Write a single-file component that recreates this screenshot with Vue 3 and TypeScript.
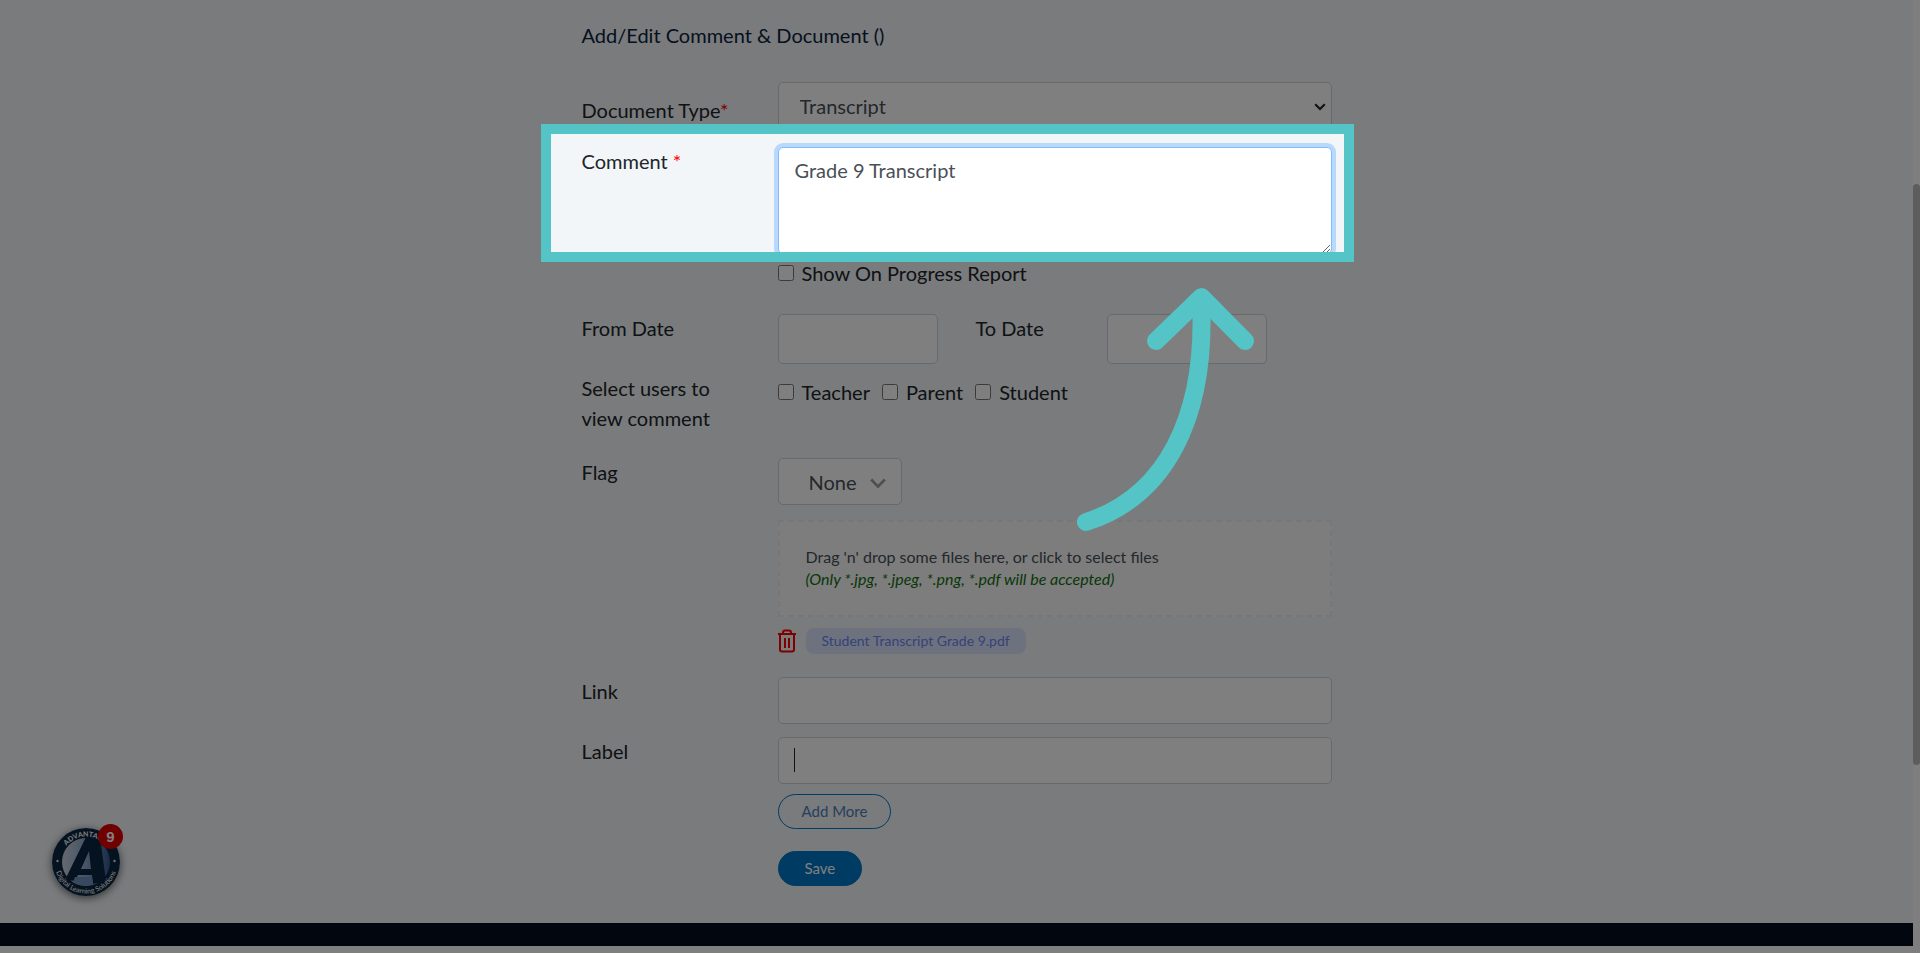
<script setup lang="ts">
import { ref } from 'vue'

interface Viewer {
  id: string
  name: string
  checked: boolean
}

const documentType = ref('Transcript')
const comment = ref('Grade 9 Transcript')
const showOnReport = ref(false)
const fromDate = ref('')
const toDate = ref('')
const flag = ref('None')
const link = ref('')
const linkLabel = ref('')
const files = ref<string[]>(['Student Transcript Grade 9.pdf'])
const viewers = ref<Viewer[]>([
  { id: 'teacher', name: 'Teacher', checked: false },
  { id: 'parent', name: 'Parent', checked: false },
  { id: 'student', name: 'Student', checked: false },
])

function removeFile(index: number) {
  files.value.splice(index, 1)
}
</script>

<template>
  <div class="page">
    <main class="content">
      <form class="form" @submit.prevent>
        <h1 class="title">Add/Edit Comment &amp; Document ()</h1>

        <div class="row type-row">
          <label class="label" for="doc-type">Document Type<span class="required">*</span></label>
          <div class="select-wrap">
            <select id="doc-type" v-model="documentType" class="control">
              <option>Transcript</option>
            </select>
            <svg class="select-arrow" viewBox="0 0 12 8" aria-hidden="true">
              <path d="M1.2 1.2 6 6l4.8-4.8" fill="none" stroke="currentColor" stroke-width="2.2" />
            </svg>
          </div>
        </div>

        <div class="row comment-row">
          <label class="label" for="comment">Comment <span class="required">*</span></label>
          <textarea id="comment" v-model="comment" class="control comment"></textarea>
          <div class="spotlight"></div>
          <svg class="arrow" viewBox="0 0 180 250" aria-hidden="true">
            <path d="M129 20C135 138 93 217 14 242" />
            <path d="M84 61 129.500 17 173 61" />
          </svg>
        </div>

        <div class="row report-row">
          <label class="check field"><input v-model="showOnReport" type="checkbox" />Show On Progress Report</label>
        </div>

        <div class="row date-row">
          <label class="label" for="from-date">From Date</label>
          <div class="dates">
            <input id="from-date" v-model="fromDate" class="control" type="text" />
            <label class="label" for="to-date">To Date</label>
            <input id="to-date" v-model="toDate" class="control" type="text" />
          </div>
        </div>

        <div class="row users-row">
          <span id="users-label" class="label">Select users to view comment</span>
          <div class="checks" role="group" aria-labelledby="users-label">
            <label v-for="viewer in viewers" :key="viewer.id" class="check">
              <input v-model="viewer.checked" type="checkbox" />{{ viewer.name }}
            </label>
          </div>
        </div>

        <div class="row flag-row">
          <label class="label" for="flag">Flag</label>
          <div class="select-wrap flag-wrap">
            <select id="flag" v-model="flag" class="control">
              <option>None</option>
            </select>
            <svg class="flag-arrow" viewBox="0 0 16 11" aria-hidden="true">
              <path d="M1.200 1.500 8 8.600l6.800-7.100" fill="none" stroke="currentColor" stroke-width="2.800" />
            </svg>
          </div>
        </div>

        <div class="row">
          <div class="field">
            <button class="dropzone" type="button">
              <span>Drag 'n' drop some files here, or click to select files</span>
              <em>(Only *.jpg, *.jpeg, *.png, *.pdf will be accepted)</em>
            </button>
            <div v-for="(file, index) in files" :key="file" class="file">
              <button class="trash" type="button" :aria-label="`Remove ${file}`" @click="removeFile(index)">
                <svg viewBox="0 0 18 24" aria-hidden="true">
                  <path d="M0 5h18M5 5V3.500Q5 1.500 7 1.500h4q2 0 2 2V5M2 5v15.500Q2 22.500 4 22.500h10q2 0 2-2V5M7 9v10M11 9v10" />
                </svg>
              </button>
              <a class="file-name" href="#">{{ file }}</a>
            </div>
          </div>
        </div>

        <div class="row link-row">
          <label class="label" for="link">Link</label>
          <input id="link" v-model="link" class="control" type="text" />
        </div>
        <div class="row">
          <label class="label" for="link-label">Label</label>
          <div class="caret-wrap">
            <input id="link-label" v-model="linkLabel" class="control" type="text" />
            <span class="caret"></span>
          </div>
        </div>

        <div class="row">
          <div class="field actions">
            <button class="btn outline" type="button">Add More</button>
            <button class="btn solid" type="submit">Save</button>
          </div>
        </div>
      </form>
    </main>
    <footer class="footer"></footer>

    <button class="widget" type="button" aria-label="Advantages Digital Learning Solutions">
      <svg viewBox="0 0 68 68" aria-hidden="true">
        <defs>
          <linearGradient id="sky" x1="0" y1="0" x2="1" y2="0">
            <stop offset="0" stop-color="#c9d3e0" />
            <stop offset="0.500" stop-color="#8fa9cc" />
            <stop offset="1" stop-color="#34588f" />
          </linearGradient>
          <path id="arc-top" d="M8.500 34a25.500 25.500 0 0 1 51 0" />
          <path id="arc-bottom" d="M2.500 34a31.500 31.500 0 0 0 63 0" />
        </defs>
        <circle cx="34" cy="34" r="34" fill="#0a2440" />
        <circle cx="34" cy="34" r="24" fill="url(#sky)" />
        <path d="M13 52 34 9h14l6 44-13 3-1-9H26l-3 6zM29 41h10L37 23z" fill="#0a2440" fill-rule="evenodd" />
        <path d="M23 49h17l1 7q-10 4-20-2z" fill="#6f90bf" />
        <circle cx="5.500" cy="33" r="1.200" fill="#dde3ea" />
        <circle cx="62.500" cy="33" r="1.200" fill="#dde3ea" />
        <text class="ring-name"><textPath href="#arc-top" startOffset="22%">ADVANTAG</textPath></text>
        <text class="ring-tag"><textPath href="#arc-bottom" startOffset="50%" text-anchor="middle">Digital Learning Solutions</textPath></text>
      </svg>
      <span class="badge">9</span>
    </button>
    <div class="scrollbar"><div class="thumb"></div></div>
  </div>
</template>

<style>
body {
  margin: 0;
  background: #fff;
}
</style>

<style scoped>
* {
  box-sizing: border-box;
}

.page {
  position: relative;
  display: flex;
  flex-direction: column;
  min-height: 100vh;
  padding: 0 7px 7px 0;
  overflow: hidden;
  background: #fff;
  color: #212529;
  font: 20px/30px Lato, "Open Sans", sans-serif;
}

.content {
  flex: 1;
  padding: 20px 24px 35px;
  background: #f2f6f9;
}

.form {
  max-width: 750px;
  margin: 0 auto;
}

.title {
  margin: 0 0 32px;
  color: #0c2340;
  font-size: 20px;
  font-weight: 400;
  line-height: 30px;
}

.row {
  position: relative;
  display: grid;
  grid-template-columns: 196px minmax(0, 1fr);
  align-items: start;
}

.label {
  line-height: 28px;
}

.field {
  grid-column: 2;
}

.required {
  color: #f00;
}

.control {
  display: block;
  width: 100%;
  height: 47px;
  margin: 0;
  padding: 7px 16px;
  border: 1px solid #ced4da;
  border-radius: 5px;
  outline: 0;
  background: #fff;
  color: #495057;
  font: inherit;
}

.type-row .label {
  padding-top: 14px;
}

.type-row .control {
  padding-left: 21px;
}

.select-wrap,
.caret-wrap {
  position: relative;
}

.select-wrap select {
  appearance: none;
}

.select-arrow {
  position: absolute;
  top: 21px;
  right: 6px;
  width: 12px;
  height: 8px;
}

.comment-row {
  margin-top: 18px;
}

.comment {
  height: 107px;
  border-color: #80bdff;
  box-shadow: 0 0 0 4px #b8d9fb;
  resize: vertical;
}

.spotlight {
  position: absolute;
  z-index: 5;
  inset: -23px -22px -8px -41px;
  border: 10px solid #54c4c6;
  box-shadow: 0 0 0 9999px rgba(0, 0, 0, 0.5);
  pointer-events: none;
}

.arrow {
  position: absolute;
  z-index: 6;
  top: 133px;
  right: 80px;
  width: 180px;
  height: 250px;
  overflow: visible;
  fill: none;
  stroke: #54c4c6;
  stroke-width: 18;
  stroke-linecap: round;
  stroke-linejoin: round;
  pointer-events: none;
}

.report-row {
  margin-top: 4px;
}

.check {
  display: flex;
  align-items: center;
  gap: 8px;
}

.check input {
  width: 16px;
  height: 16px;
  margin: 0;
}

.date-row {
  margin-top: 26px;
}

.dates {
  display: grid;
  grid-template-columns: 198px 131px 159px;
}

.dates .control {
  width: 160px;
  height: 50px;
}

.users-row {
  margin-top: 9px;
}

.users-row .label {
  padding-right: 48px;
  line-height: 30px;
}

.checks {
  display: flex;
  gap: 12px;
  padding-top: 4px;
}

.flag-row {
  margin: 25px 0 15px;
}

.flag-wrap {
  width: 124px;
}

.flag-wrap .control {
  padding-left: 30px;
}

.flag-arrow {
  position: absolute;
  top: 20px;
  right: 16px;
  width: 16px;
  height: 11px;
  color: #9aa0a6;
}

.dropzone {
  display: flex;
  flex-direction: column;
  width: 100%;
  padding: 24px 26px 25px;
  border: 2px dashed #eee;
  background: #fafafa;
  color: #495057;
  font: 16px/22px Lato, "Open Sans", sans-serif;
  text-align: left;
}

.dropzone em {
  color: #107010;
}

.file {
  display: flex;
  align-items: center;
  gap: 10px;
  margin-top: 11px;
}

.trash {
  width: 18px;
  height: 24px;
  padding: 0;
  border: 0;
  background: none;
}

.trash svg {
  display: block;
  fill: none;
  stroke: #f00;
  stroke-width: 2;
}

.file-name {
  padding: 2px 16px;
  border-radius: 8px;
  background: #dde4fd;
  color: #6a86f0;
  font-size: 14px;
  line-height: 22px;
  text-decoration: none;
}

.link-row {
  margin: 23px 0 13px;
}

.caret {
  position: absolute;
  top: 11px;
  left: 16px;
  width: 1px;
  height: 24px;
  background: #212529;
}

.actions {
  display: flex;
  flex-direction: column;
  align-items: flex-start;
  gap: 22px;
  padding-top: 10px;
}

.btn {
  padding: 0 26px;
  border: 1px solid #0077c8;
  border-radius: 18px;
  font: 15px/33px Lato, "Open Sans", sans-serif;
}

.outline {
  padding: 0 23px;
  background: transparent;
  color: #4f7fb8;
}

.solid {
  background: #0077c8;
  color: #fff;
}

.footer {
  height: 23px;
  background: #040c1e;
}

.widget {
  position: absolute;
  bottom: 57px;
  left: 52px;
  width: 68px;
  height: 68px;
  padding: 0;
  border: 0;
  border-radius: 50%;
  background: none;
  box-shadow: 0 2px 8px rgba(0, 0, 0, 0.6);
}

.widget svg {
  display: block;
}

.ring-name {
  fill: #fff;
  font: 700 7px Lato, sans-serif;
}

.ring-tag {
  fill: #fff;
  font: 7px Lato, sans-serif;
}

.badge {
  position: absolute;
  top: -4px;
  right: -3px;
  width: 25px;
  height: 25px;
  border-radius: 50%;
  background: #e00000;
  color: #fff;
  font: 700 15px/25px "Liberation Sans", sans-serif;
}

.scrollbar {
  position: absolute;
  inset: 0 0 0 auto;
  width: 7px;
  background: #fcfcfc;
}

.thumb {
  height: 61%;
  margin-top: 184px;
  border-radius: 4px;
  background: #bbb;
}
</style>
